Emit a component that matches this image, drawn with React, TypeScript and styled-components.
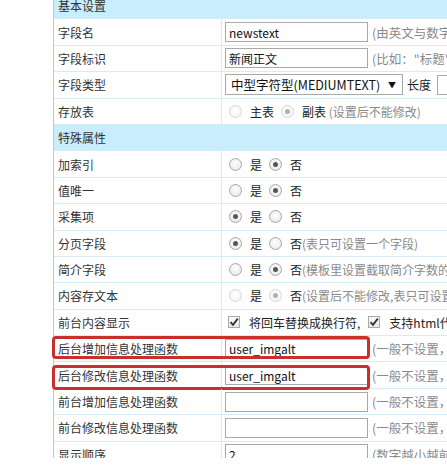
import React from 'react';
import styled, { createGlobalStyle } from 'styled-components';

const GlobalStyle = createGlobalStyle`
  html, body {
    margin: 0;
    padding: 0;
    background: #ffffff;
    overflow: hidden;
  }
  body {
    font-family: "Noto Sans CJK SC", "Noto Sans", sans-serif;
    font-size: 12px;
    color: #333;
  }
`;

const Page = styled.div`
  width: 447px;
  height: 458px;
  overflow: hidden;
  padding-left: 53px;
  box-sizing: border-box;
`;

const Table = styled.div`
  width: 620px;
  margin-top: -7px;
  border-left: 1px solid #a3d2ea;
`;

const Row = styled.div`
  position: relative;
  display: grid;
  grid-template-columns: 168px 1fr;
  height: 26.4px;
  box-sizing: border-box;
  border-bottom: 1px solid #d8eaf3;
`;

const SectionRow = styled.div`
  height: 26.4px;
  box-sizing: border-box;
  display: flex;
  align-items: center;
  padding-left: 4px;
  background: #c8edfc;
  border-bottom: 1px solid #d8eaf3;
  color: #333;
`;

const Label = styled.div`
  display: flex;
  align-items: center;
  padding-left: 4px;
  border-right: 1px solid #d8eaf3;
  white-space: nowrap;
  color: #333;
`;

const Value = styled.div`
  display: flex;
  align-items: center;
  padding-left: 3px;
  white-space: nowrap;
  color: #222;
`;

const TextInput = styled.div<{ $width?: number }>`
  width: ${(p) => p.$width ?? 143}px;
  height: 20px;
  box-sizing: border-box;
  border: 1px solid #a9a9a9;
  background: #fff;
  padding: 0 3px;
  display: flex;
  align-items: center;
  color: #111;
  font-size: 12px;
  flex-shrink: 0;
`;

const Hint = styled.span`
  margin-left: 4px;
  color: #8a8a8a;
  font-size: 12.5px;
`;

const Select = styled.div`
  width: 178px;
  height: 21px;
  box-sizing: border-box;
  border: 1px solid #a9a9a9;
  background: #fff;
  display: flex;
  align-items: center;
  justify-content: space-between;
  padding: 0 6px 0 5px;
  color: #111;
  font-size: 12.5px;
`;

const Arrow = styled.span`
  font-size: 8px;
  color: #111;
`;

const Plain = styled.span<{ $gap?: number }>`
  margin-left: ${(p) => p.$gap ?? 0}px;
  color: #222;
`;

const Option = styled.span`
  display: inline-flex;
  align-items: center;
  margin-right: 7px;
`;

const Radio = styled.span<{ $checked?: boolean; $disabled?: boolean }>`
  position: relative;
  width: 13px;
  height: 13px;
  margin: 0 8px 0 4px;
  border-radius: 50%;
  box-sizing: border-box;
  border: 1px solid ${(p) => (p.$disabled ? '#d6d6d6' : '#a8a8a8')};
  background: ${(p) =>
    p.$disabled
      ? 'radial-gradient(circle at 50% 40%, #ffffff 0%, #f1f1f1 100%)'
      : 'radial-gradient(circle at 50% 40%, #ffffff 0%, #e3e3e3 100%)'};
  &::after {
    content: '';
    display: ${(p) => (p.$checked ? 'block' : 'none')};
    position: absolute;
    left: 50%;
    top: 50%;
    width: 5px;
    height: 5px;
    margin: -2.5px 0 0 -2.5px;
    border-radius: 50%;
    background: ${(p) => (p.$disabled ? '#b0b0b0' : '#555')};
  }
`;

const OptText = styled.span<{ $muted?: boolean }>`
  color: ${(p) => (p.$muted ? '#8a8a8a' : '#222')};
`;

const CheckBox = styled.span`
  width: 12px;
  height: 12px;
  box-sizing: border-box;
  border: 1px solid #a8a8a8;
  background: linear-gradient(#fafafa, #e6e6e6);
  display: inline-flex;
  align-items: center;
  justify-content: center;
  margin: 0 9px 0 3px;
`;

const Mark = styled.span<{ $top: number; $height: number }>`
  position: absolute;
  left: -2px;
  top: ${(p) => p.$top}px;
  width: 318px;
  height: ${(p) => p.$height}px;
  box-sizing: border-box;
  border: 3px solid #c9302c;
  border-radius: 4px;
  pointer-events: none;
`;

function Tick() {
  return (
    <svg width="10" height="10" viewBox="0 0 10 10">
      <path d="M1.5 5.2 L4 7.8 L8.8 1.6" fill="none" stroke="#333" strokeWidth="1.8" />
    </svg>
  );
}

type RadioPair = { yes: boolean; disabled?: boolean; note?: string };

function YesNo({ yes, disabled, note }: RadioPair) {
  return (
    <>
      <Option>
        <Radio $checked={yes} $disabled={disabled} />
        <OptText>是</OptText>
      </Option>
      <Option>
        <Radio $checked={!yes} $disabled={disabled} style={{ marginLeft: 0 }} />
        <OptText>
          否<OptText $muted>{note}</OptText>
        </OptText>
      </Option>
    </>
  );
}

const radioRows: { label: string; yes: boolean; disabled?: boolean; note?: string }[] = [
  { label: '加索引', yes: false },
  { label: '值唯一', yes: false },
  { label: '采集项', yes: true },
  { label: '分页字段', yes: true, note: '(表只可设置一个字段)' },
  { label: '简介字段', yes: false, note: '(模板里设置截取简介字数的字段)' },
  { label: '内容存文本', yes: false, disabled: true, note: '(设置后不能修改,表只可设置一个字段)' },
];

const funcRows: { label: string; value: string; mark?: [number, number] }[] = [
  { label: '后台增加信息处理函数', value: 'user_imgalt', mark: [0, 23] },
  { label: '后台修改信息处理函数', value: 'user_imgalt', mark: [3, 25] },
  { label: '前台增加信息处理函数', value: '' },
  { label: '前台修改信息处理函数', value: '' },
];

export default function App() {
  return (
    <Page>
      <GlobalStyle />
      <Table>
        <SectionRow>基本设置</SectionRow>
        <Row>
          <Label>字段名</Label>
          <Value>
            <TextInput>newstext</TextInput>
            <Hint>(由英文与数字、底线组成)</Hint>
          </Value>
        </Row>
        <Row>
          <Label>字段标识</Label>
          <Value>
            <TextInput>新闻正文</TextInput>
            <Hint>(比如："标题")</Hint>
          </Value>
        </Row>
        <Row>
          <Label>字段类型</Label>
          <Value>
            <Select>
              中型字符型(MEDIUMTEXT)
              <Arrow>▼</Arrow>
            </Select>
            <Plain $gap={4}>长度</Plain>
            <TextInput $width={60} style={{ marginLeft: 6 }} />
          </Value>
        </Row>
        <Row>
          <Label>存放表</Label>
          <Value>
            <Option>
              <Radio $disabled />
              <OptText>主表</OptText>
            </Option>
            <Option>
              <Radio $checked $disabled style={{ marginLeft: 0 }} />
              <OptText>
                副表 <OptText $muted>(设置后不能修改)</OptText>
              </OptText>
            </Option>
          </Value>
        </Row>
        <SectionRow>特殊属性</SectionRow>
        {radioRows.map((r) => (
          <Row key={r.label}>
            <Label>{r.label}</Label>
            <Value>
              <YesNo yes={r.yes} disabled={r.disabled} note={r.note} />
            </Value>
          </Row>
        ))}
        <Row>
          <Label>前台内容显示</Label>
          <Value>
            <CheckBox>
              <Tick />
            </CheckBox>
            <Plain>将回车替换成换行符,</Plain>
            <CheckBox style={{ marginLeft: 8 }}>
              <Tick />
            </CheckBox>
            <Plain>支持html代码</Plain>
          </Value>
        </Row>
        {funcRows.map((r) => (
          <Row key={r.label}>
            <Label>{r.label}</Label>
            <Value>
              <TextInput>{r.value}</TextInput>
              <Hint>(一般不设置，直接留空)</Hint>
            </Value>
            {r.mark && <Mark $top={r.mark[0]} $height={r.mark[1]} />}
          </Row>
        ))}
        <Row>
          <Label>显示顺序</Label>
          <Value>
            <TextInput>2</TextInput>
            <Hint>(数字越小越前面)</Hint>
          </Value>
        </Row>
      </Table>
    </Page>
  );
}
